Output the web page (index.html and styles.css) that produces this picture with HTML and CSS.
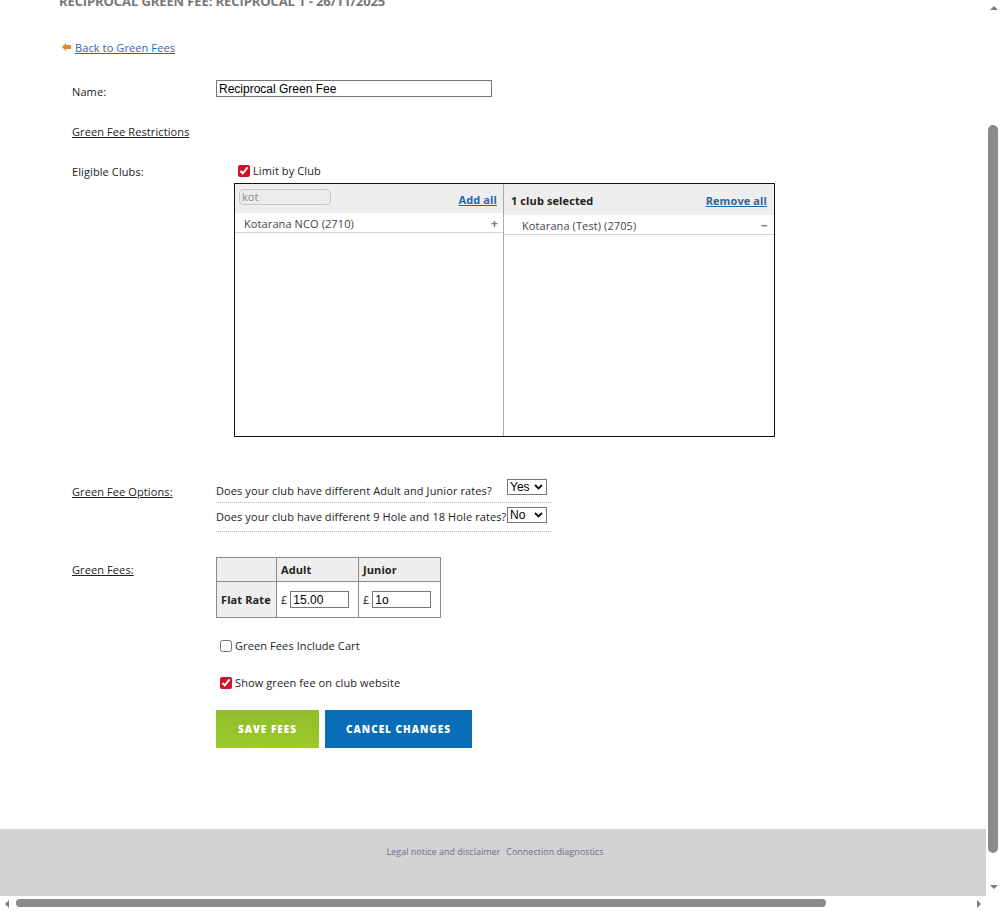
FILE: index.html
```html
<!DOCTYPE html>
<html>
<head>
<meta charset="utf-8">
<link rel="stylesheet" href="styles.css">
</head>
<body>
<div class="screen">
  <div class="viewport">
    <div class="page">
      <h1 class="title">RECIPROCAL GREEN FEE: RECIPROCAL 1 - 26/11/2025</h1>
      <div class="back">
        <svg class="back-icon" width="9" height="8" viewBox="0 0 9 8"><path d="M0 4 L4 0 L4 2 L9 2 L9 6 L4 6 L4 8 Z" fill="#e08a2a"/></svg>
        <a href="#" class="link">Back to Green Fees</a>
      </div>

      <div class="row row-name">
        <div class="label">Name:</div>
        <div class="field"><input class="text-input name-input" type="text" value="Reciprocal Green Fee"></div>
      </div>

      <div class="row row-restrict">
        <div class="label u">Green Fee Restrictions</div>
      </div>

      <div class="row row-eligible">
        <div class="label">Eligible Clubs:</div>
        <div class="field">
          <label class="check check-limit"><input type="checkbox" checked> Limit by Club</label>
          <div class="picker">
            <div class="pane pane-left">
              <div class="pane-head">
                <input class="search" type="text" value="kot">
                <a href="#" class="link bold">Add all</a>
              </div>
              <div class="item"><span>Kotarana NCO (2710)</span><span class="sign">+</span></div>
            </div>
            <div class="pane pane-right">
              <div class="pane-head head-right">
                <span class="bold dark">1 club selected</span>
                <a href="#" class="link bold">Remove all</a>
              </div>
              <div class="item item-right"><span>Kotarana (Test) (2705)</span><span class="sign">&minus;</span></div>
            </div>
          </div>
        </div>
      </div>

      <div class="row row-options">
        <div class="label u">Green Fee Options:</div>
        <div class="field">
          <div class="opt">
            <span class="opt-q">Does your club have different Adult and Junior rates?</span>
            <span class="sel">Yes<svg width="9" height="6" viewBox="0 0 9 6"><path d="M1 1 L4.5 4.5 L8 1" stroke="#111" stroke-width="1.8" fill="none"/></svg></span>
          </div>
          <div class="opt opt2">
            <span class="opt-q">Does your club have different 9 Hole and 18 Hole rates?</span>
            <span class="sel">No<svg width="9" height="6" viewBox="0 0 9 6"><path d="M1 1 L4.5 4.5 L8 1" stroke="#111" stroke-width="1.8" fill="none"/></svg></span>
          </div>
        </div>
      </div>

      <div class="row row-fees">
        <div class="label u">Green Fees:</div>
        <div class="field">
          <table class="fees">
            <tr class="fees-head"><th class="c1"></th><th class="c2">Adult</th><th class="c3">Junior</th></tr>
            <tr><th class="c1">Flat Rate</th><td>£ <input class="fee-input" type="text" value="15.00"></td><td>£ <input class="fee-input" type="text" value="1o"></td></tr>
          </table>
          <label class="check check-cart"><input type="checkbox"> Green Fees Include Cart</label>
          <label class="check check-show"><input type="checkbox" checked> Show green fee on club website</label>
          <div class="buttons">
            <button class="btn btn-save">SAVE FEES</button>
            <button class="btn btn-cancel">CANCEL CHANGES</button>
          </div>
        </div>
      </div>
    </div>
    <footer class="footer">
      <a href="#">Legal notice and disclaimer</a>
      <a href="#">Connection diagnostics</a>
    </footer>
  </div>
  <div class="vscroll">
    <span class="arrow arrow-up"></span>
    <span class="vtrack"><span class="vthumb"></span></span>
    <span class="arrow arrow-down"></span>
  </div>
  <div class="hscroll">
    <span class="arrow arrow-left"></span>
    <span class="htrack"><span class="hthumb"></span></span>
    <span class="arrow arrow-right"></span>
  </div>
  <div class="corner"></div>
</div>
</body>
</html>
```

FILE: styles.css
```css
html, body {
  margin: 0;
  padding: 0;
  background: #fff;
}
body {
  font-family: "Open Sans", "Noto Sans", sans-serif;
  font-size: 11px;
  letter-spacing: 0.1px;
  color: #222;
  overflow: hidden;
}
.screen {
  width: 1001px;
  height: 911px;
  display: grid;
  grid-template-columns: 986px 15px;
  grid-template-rows: 896px 15px;
}
.viewport {
  display: flex;
  flex-direction: column;
  overflow: hidden;
  background: #fff;
}
.page {
  flex: 1;
  padding-left: 59px;
}
.title {
  margin: -7px 0 0 0;
  font-size: 13px;
  font-weight: 700;
  color: #777;
  line-height: 16px;
  letter-spacing: -0.1px;
}
.back {
  display: flex;
  align-items: center;
  gap: 4px;
  margin-top: 31px;
  margin-left: 3px;
  height: 14px;
}
.back-icon { display: block; }
.link {
  color: #1d6ab0;
  text-decoration: underline;
}
.bold { font-weight: 700; }
.dark { color: #222; }
.u { text-decoration: underline; }

.row {
  display: grid;
  grid-template-columns: 144px 1fr;
  margin-left: 13px;
  align-items: start;
}
.label { line-height: 15px; }
.row-name { margin-top: 26px; }
.row-name .label { padding-top: 4px; }
.text-input {
  font-family: "Liberation Sans", Arial, sans-serif;
  font-size: 12px;
  letter-spacing: 0;
  border: 1px solid #767676;
  padding: 0 2px;
  height: 17px;
  box-sizing: border-box;
  color: #000;
  border-radius: 0;
  margin: 0;
  display: block;
}
.name-input { width: 276px; }
.row-restrict { margin-top: 25px; }
.row-eligible { margin-top: 24px; }
.row-eligible .label { padding-top: 1px; }
.check {
  display: flex;
  align-items: center;
  gap: 3px;
  line-height: 15px;
}
.check input {
  margin: 0;
  width: 12px;
  height: 12px;
  accent-color: #d1112c;
}
.check-limit { margin-left: 22px; }
.picker {
  display: flex;
  margin-top: 5px;
  margin-left: 18px;
  width: 541px;
  height: 254px;
  border: 1px solid #111;
  box-sizing: border-box;
}
.pane { height: 100%; }
.pane-left {
  width: 268px;
  border-right: 1px solid #aaa;
}
.pane-right { flex: 1; }
.pane-head {
  display: flex;
  justify-content: space-between;
  align-items: center;
  background: #eeeeee;
  height: 29px;
  padding: 0 6px 0 4px;
}
.head-right { height: 31px; padding: 0 7px 0 7px; }
.search {
  width: 92px;
  height: 16px;
  box-sizing: border-box;
  border: 1px solid #c7c7c7;
  border-radius: 4px;
  background: #ececec;
  font-family: "Open Sans", sans-serif;
  font-size: 11px;
  color: #888;
  padding: 0 2px;
  margin-top: -4px;
}
.pane-head .link { margin-top: 2px; }
.head-right .bold { margin-top: 2px; }
.item {
  display: flex;
  justify-content: space-between;
  align-items: center;
  border-bottom: 1px solid #d6d6d6;
  padding: 2px 5px 0 9px;
  box-sizing: content-box;
  height: 17px;
  color: #444;
}
.item-right { padding: 2px 6px 0 18px; }
.sign { color: #777; font-size: 12px; font-weight: 700; }

.row-options { margin-top: 42px; }
.row-options .label { padding-top: 5px; }
.opt {
  position: relative;
  width: 335px;
  height: 24px;
  box-sizing: border-box;
  border-bottom: 1px dotted #bbb;
  padding-top: 4px;
}
.opt2 { height: 29px; padding-top: 6px; }
.opt-q { line-height: 15px; color: #222; display: block; white-space: nowrap; }
.sel {
  position: absolute;
  left: 291px;
  top: 0;
  display: flex;
  align-items: center;
  gap: 3px;
  width: 40px;
  height: 16px;
  box-sizing: border-box;
  border: 1px solid #767676;
  font-family: "Liberation Sans", Arial, sans-serif;
  font-size: 12px;
  letter-spacing: 0;
  padding-left: 2px;
  color: #000;
  background: #fff;
}
.opt2 .sel { top: 4px; }
.sel svg { margin-left: auto; margin-right: 3px; }

.row-fees { margin-top: 25px; }
.row-fees .label { padding-top: 5px; }
.fees {
  border-collapse: collapse;
  border: 1px solid #8a8a8a;
}
.fees th, .fees td {
  border: 1px solid #8a8a8a;
  padding: 0 4px;
  text-align: left;
  font-size: 11px;
}
.fees-head th { height: 23px; background: #eeeeee; }
.fees .c1 { width: 51px; background: #eeeeee; }
.fees .c2 { width: 73px; }
.fees .c3 { width: 73px; }
.fees tr + tr th, .fees tr + tr td { height: 35px; }
.fee-input {
  width: 59px;
  height: 17px;
  box-sizing: border-box;
  border: 1px solid #767676;
  font-family: "Liberation Sans", Arial, sans-serif;
  font-size: 12px;
  letter-spacing: 0;
  padding: 0 2px;
  margin: 0;
  color: #000;
}
.check-cart { margin-top: 20px; margin-left: 4px; }
.check-show { margin-top: 22px; margin-left: 4px; }
.buttons {
  display: flex;
  gap: 6px;
  margin-top: 20px;
}
.btn {
  border: 0;
  height: 38px;
  color: #fff;
  font-family: "Open Sans", sans-serif;
  font-weight: 800;
  font-size: 10px;
  letter-spacing: 1px;
  padding: 0;
  margin: 0;
}
.btn-save {
  width: 103px;
  background: linear-gradient(#8fbd2a, #9dc92c);
}
.btn-cancel {
  width: 147px;
  background: #0a6dba;
}

.footer {
  height: 67px;
  background: #d3d3d3;
  display: flex;
  justify-content: center;
  gap: 6px;
  padding-top: 16px;
  padding-left: 4px;
  box-sizing: border-box;
  font-size: 9px;
  letter-spacing: 0;
}
.footer a {
  color: #6b6e8e;
  text-decoration: none;
}

.vscroll {
  background: #fff;
  display: flex;
  flex-direction: column;
  align-items: center;
}
.vtrack {
  flex: 1;
  width: 100%;
  position: relative;
}
.vthumb {
  position: absolute;
  left: 2px;
  right: 3px;
  top: 112px;
  height: 728px;
  background: #8a8a8a;
  border-radius: 5px;
}
.hscroll {
  background: #fff;
  display: flex;
  align-items: center;
}
.htrack {
  flex: 1;
  height: 100%;
  position: relative;
}
.hthumb {
  position: absolute;
  left: 3px;
  width: 810px;
  top: 3px;
  bottom: 4px;
  background: #8a8a8a;
  border-radius: 5px;
}
.corner { background: #fff; }
.arrow {
  width: 0;
  height: 0;
  border: 4px solid transparent;
  flex: none;
}
.arrow-up { border-bottom-color: #7a7a7a; border-top-width: 0; margin-top: 6px; margin-bottom: 3px; }
.arrow-down { border-top-color: #7a7a7a; border-bottom-width: 0; margin-bottom: 7px; margin-top: 4px; }
.arrow-left { border-right-color: #7a7a7a; border-left-width: 0; margin-left: 5px; margin-right: 4px; }
.arrow-right { border-left-color: #7a7a7a; border-right-width: 0; margin-right: 5px; margin-left: 4px; }
```
